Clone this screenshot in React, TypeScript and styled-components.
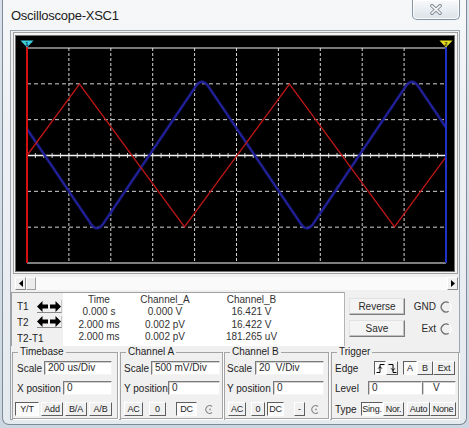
import React from "react";
import styled, { createGlobalStyle, css } from "styled-components";

const GlobalStyle = createGlobalStyle`
  html, body { margin: 0; padding: 0; }
  body {
    width: 469px;
    height: 428px;
    overflow: hidden;
    background: linear-gradient(180deg, #d9e1ea 0%, #cdd7e2 100%);
    font-family: "Liberation Sans", Arial, sans-serif;
  }
  #root { width: 469px; height: 428px; }
`;

const Window = styled.div`
  box-sizing: border-box;
  margin-left: 2px;
  width: 465px;
  height: 425px;
  border: 1px solid #7d8a97;
  border-top: none;
  border-radius: 0 0 7px 7px;
  background: linear-gradient(180deg, #f6f7f9 0%, #eef1f4 30%, #e5eaef 100%);
  padding: 0 6px 4px 7px;
  display: flex;
  flex-direction: column;
`;

const TitleBar = styled.div`
  height: 30px;
  flex-shrink: 0;
  display: flex;
  align-items: flex-start;
  justify-content: space-between;
`;

const Title = styled.span`
  margin: 8px 0 0 1px;
  font-size: 13px;
  line-height: 16px;
  letter-spacing: -0.25px;
  color: #1b1b1b;
`;

const CloseButton = styled.div`
  box-sizing: border-box;
  width: 48px;
  height: 20px;
  border: 1px solid #8795a3;
  border-top: none;
  border-radius: 0 0 5px 5px;
  background: linear-gradient(180deg, #f8f9fb 0%, #e9edf1 55%, #dce2e8 100%);
  box-shadow: inset 0 0 0 1px rgba(255, 255, 255, 0.85);
  display: flex;
  align-items: center;
  justify-content: center;
`;

const Client = styled.div`
  box-sizing: border-box;
  width: 450px;
  height: 390px;
  border: 1px solid #9aa5b0;
  background: #f0f0f0;
  display: flex;
  flex-direction: column;
`;

const ScopeFrame = styled.div`
  box-sizing: border-box;
  margin: 1px 0 0 2px;
  width: 445px;
  height: 242px;
  padding: 3px 3px 2px 2px;
  border: 1px solid #a0a0a0;
  background: #f4f4f4;
`;

const Screen = styled.div`
  width: 438px;
  height: 235px;
  background: #000;
  box-shadow: 0 0 0 1px #6f6f6f;
  svg { display: block; }
`;

const ScrollBar = styled.div`
  margin: 3px 0 0 4px;
  width: 443px;
  height: 13px;
  display: flex;
  background: #fafafa;
`;

const ScrollButton = styled.div`
  box-sizing: border-box;
  width: 11px;
  height: 13px;
  background: #f0f0f0;
  border: 1px solid;
  border-color: #ffffff #8a8a8a #8a8a8a #ffffff;
  display: flex;
  align-items: center;
  justify-content: center;
`;

const ScrollThumb = styled.div`
  box-sizing: border-box;
  width: 10px;
  height: 13px;
  background: #ececec;
  border: 1px solid;
  border-color: #ffffff #a0a0a0 #a0a0a0 #ffffff;
`;

const ScrollTrack = styled.div`
  flex: 1;
`;

const ReadoutRow = styled.div`
  margin-top: 2px;
  height: 54px;
  display: flex;
`;

const CursorBox = styled.div`
  box-sizing: border-box;
  width: 52px;
  height: 54px;
  border-left: 1px solid #a0a0a0;
  border-top: 1px solid #a0a0a0;
  padding: 7px 0 0 5px;
  display: grid;
  grid-template-columns: 20px 25px;
  grid-template-rows: 13px 12px 14px;
  row-gap: 3px;
  align-items: center;
`;

const CursorLabel = styled.span<{ $span?: boolean }>`
  font-size: 10px;
  color: #1e1e1e;
  white-space: nowrap;
  ${(p) => p.$span && css`grid-column: 1 / span 2;`}
`;

const ArrowButton = styled.div`
  box-sizing: border-box;
  width: 25px;
  height: 100%;
  border-bottom: 1px solid #8a8a8a;
  border-right: 1px solid #c8c8c8;
  display: flex;
  align-items: center;
  justify-content: center;
`;

const Readout = styled.div`
  box-sizing: border-box;
  width: 282px;
  height: 54px;
  background: #fff;
  border-top: 1px solid #a0a0a0;
  border-right: 1px solid #b4b4b4;
  display: grid;
  grid-template-columns: 72px 60px 113px;
  grid-template-rows: 12px 13px 12px 13px;
  align-content: start;
`;

const ReadCell = styled.div`
  font-size: 10px;
  color: #333;
  text-align: center;
  white-space: nowrap;
  display: flex;
  align-items: center;
  justify-content: center;
`;

const RightControls = styled.div`
  flex: 1;
  display: grid;
  grid-template-columns: 60px 1fr;
  grid-template-rows: 17px 17px;
  row-gap: 5px;
  padding-top: 6px;
  align-content: start;
`;

const BigButton = styled.button`
  box-sizing: border-box;
  margin: 0 0 0 4px;
  padding: 0;
  width: 56px;
  height: 17px;
  font-family: "Liberation Sans", Arial, sans-serif;
  font-size: 10px;
  color: #2a2a2a;
  background: #f4f4f4;
  border: 1px solid;
  border-color: #e2e2e2 #7a7a7a #7a7a7a #e2e2e2;
  box-shadow: inset -1px -1px 0 #c0c0c0;
`;

const RadioRow = styled.div`
  display: flex;
  align-items: center;
  justify-content: flex-end;
  gap: 4px;
  padding-right: 7px;
  font-size: 10px;
  color: #2a2a2a;
`;

const GroupsRow = styled.div`
  display: flex;
  padding-left: 1px;
  align-items: flex-start;
`;

const Group = styled.fieldset<{ $w: number; $ml?: number }>`
  box-sizing: border-box;
  width: ${(p) => p.$w}px;
  margin: 0 0 0 ${(p) => p.$ml ?? 0}px;
  padding: 0 2px 2px 2px;
  min-width: 0;
  border: 1px solid #a4a4a4;
  box-shadow: 1px 1px 0 #ffffff;
`;

const Legend = styled.legend`
  margin-left: 3px;
  padding: 0 2px;
  font-size: 10px;
  line-height: 12px;
  color: #1e1e1e;
`;

const Row = styled.div<{ $mt: number }>`
  margin-top: ${(p) => p.$mt}px;
  height: 14px;
  display: flex;
  align-items: center;
`;

const Label = styled.span<{ $w: number; $ml?: number }>`
  width: ${(p) => p.$w}px;
  margin-left: ${(p) => p.$ml ?? 0}px;
  flex-shrink: 0;
  font-size: 10px;
  color: #1e1e1e;
  white-space: nowrap;
`;

const Field = styled.div<{ $w: number; $center?: boolean }>`
  box-sizing: border-box;
  width: ${(p) => p.$w}px;
  height: 14px;
  flex-shrink: 0;
  background: #fff;
  border: 1px solid;
  border-color: #7a7a7a #f4f4f4 #f4f4f4 #7a7a7a;
  box-shadow: inset 1px 1px 0 #d0d0d0;
  padding-left: ${(p) => (p.$center ? 10 : 3)}px;
  font-size: 10px;
  line-height: 12px;
  color: #2a2a2a;
  white-space: pre;
  overflow: hidden;
`;

const Btn = styled.button<{ $w: number; $ml?: number; $pressed?: boolean }>`
  box-sizing: border-box;
  width: ${(p) => p.$w}px;
  height: 14px;
  margin: 0 0 0 ${(p) => p.$ml ?? 0}px;
  padding: 0;
  flex-shrink: 0;
  font-family: "Liberation Sans", Arial, sans-serif;
  font-size: 9px;
  letter-spacing: -0.2px;
  line-height: 12px;
  color: #1e1e1e;
  white-space: nowrap;
  overflow: hidden;
  display: flex;
  align-items: center;
  justify-content: center;
  border: 1px solid;
  ${(p) =>
    p.$pressed
      ? css`
          border-color: #5e5e5e #ffffff #ffffff #5e5e5e;
          background: #fbfbfb;
        `
      : css`
          border-color: #ffffff #5e5e5e #5e5e5e #ffffff;
          background: #f0f0f0;
        `}
`;

const IconSlot = styled.span<{ $ml: number }>`
  margin-left: ${(p) => p.$ml}px;
  display: flex;
  align-items: center;
`;

/* ---------- drawings ---------- */

const CloseGlyph = () => (
  <svg width="14" height="11" viewBox="0 0 14 11">
    <path d="M3 1.8 L11 9.2 M11 1.8 L3 9.2" stroke="#7d848c" strokeWidth="3.6" strokeLinecap="round" fill="none" />
    <path d="M3 1.8 L11 9.2 M11 1.8 L3 9.2" stroke="#f4f5f7" strokeWidth="1.8" strokeLinecap="round" fill="none" />
  </svg>
);

const ArrowPair = () => (
  <svg width="24" height="11" viewBox="0 0 24 11">
    <polygon points="0,5.5 5.5,0 5.5,3.5 11,3.5 11,7.5 5.5,7.5 5.5,11" fill="#000" />
    <polygon points="24,5.5 18.5,0 18.5,3.5 13,3.5 13,7.5 18.5,7.5 18.5,11" fill="#000" />
  </svg>
);

const Tri = ({ dir }: { dir: "l" | "r" }) => (
  <svg width="4" height="7" viewBox="0 0 4 7">
    <polygon points={dir === "l" ? "4,0 0,3.5 4,7" : "0,0 4,3.5 0,7"} fill="#000" />
  </svg>
);

const Radio = () => (
  <svg width="12" height="12" viewBox="0 0 12 12">
    <path d="M8.8 1.7 A5 5 0 1 0 8.8 10.3" stroke="#6f6f6f" strokeWidth="1.3" fill="none" />
    <path d="M8.8 1.7 A5 5 0 0 1 8.8 10.3" stroke="#ffffff" strokeWidth="1.3" fill="none" />
  </svg>
);

const Knob = () => (
  <svg width="9" height="9" viewBox="0 0 9 9">
    <path d="M7 1.5 A3.8 3.8 0 1 0 7 7.5" stroke="#8a8a8a" strokeWidth="1.1" fill="none" />
    <circle cx="5" cy="4.5" r="1" fill="#9a9a9a" />
  </svg>
);

const RisingEdge = () => (
  <svg width="9" height="9" viewBox="0 0 9 9">
    <path d="M0.5 8.5 H4 V0.5 H8.5" stroke="#000" strokeWidth="1" fill="none" />
    <path d="M2.2 4.6 L4 2.6 L5.8 4.6" stroke="#000" strokeWidth="1" fill="none" />
  </svg>
);

const FallingEdge = () => (
  <svg width="9" height="9" viewBox="0 0 9 9">
    <path d="M0.5 0.5 H5 V8.5 H8.5" stroke="#000" strokeWidth="1" fill="none" />
    <path d="M3.2 4.4 L5 6.4 L6.8 4.4" stroke="#000" strokeWidth="1" fill="none" />
  </svg>
);

const X0 = 27;
const X1 = 446;
const Y0 = 48;
const Y1 = 263;
const DX = (X1 - X0) / 10;
const DY = (Y1 - Y0) / 6;

function triVal(x: number, peakX: number, period: number) {
  let u = ((x - peakX) / period) % 1;
  if (u < 0) u += 1;
  const d = Math.min(u, 1 - u);
  return 1 - 4 * d;
}

function bluePath() {
  const pts: string[] = [];
  for (let x = X0; x <= X1; x += 1) {
    let s = 0;
    let n = 0;
    for (let k = -6; k <= 6; k++) {
      s += triVal(x + k, 202, 210);
      n++;
    }
    const v = s / n;
    pts.push(`${x},${(155 - 78 * v).toFixed(2)}`);
  }
  return pts.join(" ");
}

function redPath() {
  const pts: string[] = [];
  const xs = [X0, 79.5, 184.5, 289.5, 394.5, X1];
  xs.forEach((x) => {
    const v = triVal(x, 79.5, 210);
    pts.push(`${x},${(155.5 - 71.5 * v).toFixed(2)}`);
  });
  return pts.join(" ");
}

const ScopeDrawing = () => {
  const verticals = Array.from({ length: 9 }, (_, i) => X0 + DX * (i + 1));
  const horizontals = [1, 2, 4, 5].map((k) => Y0 + DY * k);
  const ticks = Array.from({ length: 49 }, (_, i) => X0 + (DX / 5) * (i + 1));
  const yc = Y0 + DY * 3;
  const blue = bluePath();
  return (
    <svg width="438" height="235" viewBox="16 36 438 235">
      <rect x="16" y="36" width="438" height="235" fill="#000" />
      {verticals.map((x) => (
        <line key={x} x1={x} y1={Y0} x2={x} y2={Y1} stroke="#d4d4d4" strokeWidth="1" strokeDasharray="3 2" />
      ))}
      {horizontals.map((y) => (
        <line key={y} x1={X0} y1={y} x2={X1} y2={y} stroke="#d4d4d4" strokeWidth="1" strokeDasharray="4 3" />
      ))}
      <line x1={X0} y1={Y0} x2={X1} y2={Y0} stroke="#f2f2f2" strokeWidth="1.2" />
      <line x1={X0} y1={Y1} x2={X1} y2={Y1} stroke="#a9a9a9" strokeWidth="1.6" />
      <line x1={X0} y1={yc} x2={X1} y2={yc} stroke="#f4f4f4" strokeWidth="1.3" />
      {ticks.map((x) => (
        <line key={x} x1={x} y1={yc - 2.5} x2={x} y2={yc + 2.5} stroke="#e6e6e6" strokeWidth="0.9" />
      ))}
      <polyline points={blue} fill="none" stroke="#1c1c80" strokeWidth="3" strokeLinejoin="round" opacity="0.7" />
      <polyline points={blue} fill="none" stroke="#2222a0" strokeWidth="1.6" strokeLinejoin="round" />
      <polyline points={redPath()} fill="none" stroke="#c01616" strokeWidth="1.3" />
      <line x1={X0} y1={46} x2={X0} y2={Y1} stroke="#d21010" strokeWidth="2" />
      <line x1={X1} y1={46} x2={X1} y2={Y1} stroke="#2030c8" strokeWidth="2" />
      <polygon points="20.5,40.5 33.5,40.5 27,47.5" fill="#3ccfe0" />
      <text x="27" y="45.6" fontSize="6" fontFamily="Liberation Sans, Arial, sans-serif" fontWeight="bold" textAnchor="middle" fill="#0a3040">1</text>
      <polygon points="439.5,40.5 452.5,40.5 446,47.5" fill="#e8e020" />
      <text x="446" y="45.6" fontSize="6" fontFamily="Liberation Sans, Arial, sans-serif" fontWeight="bold" textAnchor="middle" fill="#403a00">2</text>
    </svg>
  );
};

const readRows = [
  ["Time", "Channel_A", "Channel_B"],
  ["0.000 s", "0.000 V", "16.421 V"],
  ["2.000 ms", "0.002 pV", "16.422 V"],
  ["2.000 ms", "0.002 pV", "181.265 uV"],
];

export default function App() {
  return (
    <>
      <GlobalStyle />
      <Window>
        <TitleBar>
          <Title>Oscilloscope-XSC1</Title>
          <CloseButton>
            <CloseGlyph />
          </CloseButton>
        </TitleBar>
        <Client>
          <ScopeFrame>
            <Screen>
              <ScopeDrawing />
            </Screen>
          </ScopeFrame>
          <ScrollBar>
            <ScrollButton>
              <Tri dir="l" />
            </ScrollButton>
            <ScrollThumb />
            <ScrollTrack />
            <ScrollButton>
              <Tri dir="r" />
            </ScrollButton>
          </ScrollBar>

          <ReadoutRow>
            <CursorBox>
              <CursorLabel>T1</CursorLabel>
              <ArrowButton>
                <ArrowPair />
              </ArrowButton>
              <CursorLabel>T2</CursorLabel>
              <ArrowButton>
                <ArrowPair />
              </ArrowButton>
              <CursorLabel $span>T2-T1</CursorLabel>
            </CursorBox>
            <Readout>
              {readRows.map((r, i) =>
                r.map((c, j) => <ReadCell key={`${i}-${j}`}>{c}</ReadCell>)
              )}
            </Readout>
            <RightControls>
              <BigButton>Reverse</BigButton>
              <RadioRow>
                GND <Radio />
              </RadioRow>
              <BigButton>Save</BigButton>
              <RadioRow>
                Ext <Radio />
              </RadioRow>
            </RightControls>
          </ReadoutRow>

          <GroupsRow>
            <Group $w={106}>
              <Legend>Timebase</Legend>
              <Row $mt={3}>
                <Label $w={27} $ml={2}>Scale</Label>
                <Field $w={68}>200 us/Div</Field>
              </Row>
              <Row $mt={6}>
                <Label $w={46} $ml={2}>X position</Label>
                <Field $w={49}>0</Field>
              </Row>
              <Row $mt={7}>
                <Btn $w={24} $pressed>Y/T</Btn>
                <Btn $w={22} $ml={2}>Add</Btn>
                <Btn $w={22} $ml={2}>B/A</Btn>
                <Btn $w={23} $ml={2}>A/B</Btn>
              </Row>
            </Group>

            <Group $w={103} $ml={2}>
              <Legend>Channel A</Legend>
              <Row $mt={3}>
                <Label $w={27} $ml={1}>Scale</Label>
                <Field $w={69}>500 mV/Div</Field>
              </Row>
              <Row $mt={6}>
                <Label $w={44} $ml={1}>Y position</Label>
                <Field $w={52}>0</Field>
              </Row>
              <Row $mt={7}>
                <Btn $w={19} $ml={1}>AC</Btn>
                <Btn $w={17} $ml={6}>0</Btn>
                <Btn $w={21} $ml={10} $pressed>DC</Btn>
                <IconSlot $ml={8}>
                  <Knob />
                </IconSlot>
              </Row>
            </Group>

            <Group $w={105} $ml={1}>
              <Legend>Channel B</Legend>
              <Row $mt={3}>
                <Label $w={28}>Scale</Label>
                <Field $w={69}>{"20  V/Div"}</Field>
              </Row>
              <Row $mt={6}>
                <Label $w={46}>Y position</Label>
                <Field $w={51}>0</Field>
              </Row>
              <Row $mt={7}>
                <Btn $w={18} $ml={1}>AC</Btn>
                <Btn $w={14} $ml={5}>0</Btn>
                <Btn $w={17} $ml={2} $pressed>DC</Btn>
                <Btn $w={11} $ml={10}>-</Btn>
                <IconSlot $ml={6}>
                  <Knob />
                </IconSlot>
              </Row>
            </Group>

            <Group $w={128} $ml={2}>
              <Legend>Trigger</Legend>
              <Row $mt={3}>
                <Label $w={39} $ml={1}>Edge</Label>
                <Btn $w={12} $pressed>
                  <RisingEdge />
                </Btn>
                <Btn $w={12}>
                  <FallingEdge />
                </Btn>
                <Btn $w={14} $ml={5} $pressed>A</Btn>
                <Btn $w={16}>B</Btn>
                <Btn $w={22}>Ext</Btn>
              </Row>
              <Row $mt={6}>
                <Label $w={33} $ml={1}>Level</Label>
                <Field $w={54}>0</Field>
                <Field $w={34} $center>V</Field>
              </Row>
              <Row $mt={7}>
                <Label $w={26} $ml={1}>Type</Label>
                <Btn $w={22} $pressed>Sing.</Btn>
                <Btn $w={21}>Nor.</Btn>
                <Btn $w={23} $ml={3}>Auto</Btn>
                <Btn $w={26}>None</Btn>
              </Row>
            </Group>
          </GroupsRow>
        </Client>
      </Window>
    </>
  );
}
